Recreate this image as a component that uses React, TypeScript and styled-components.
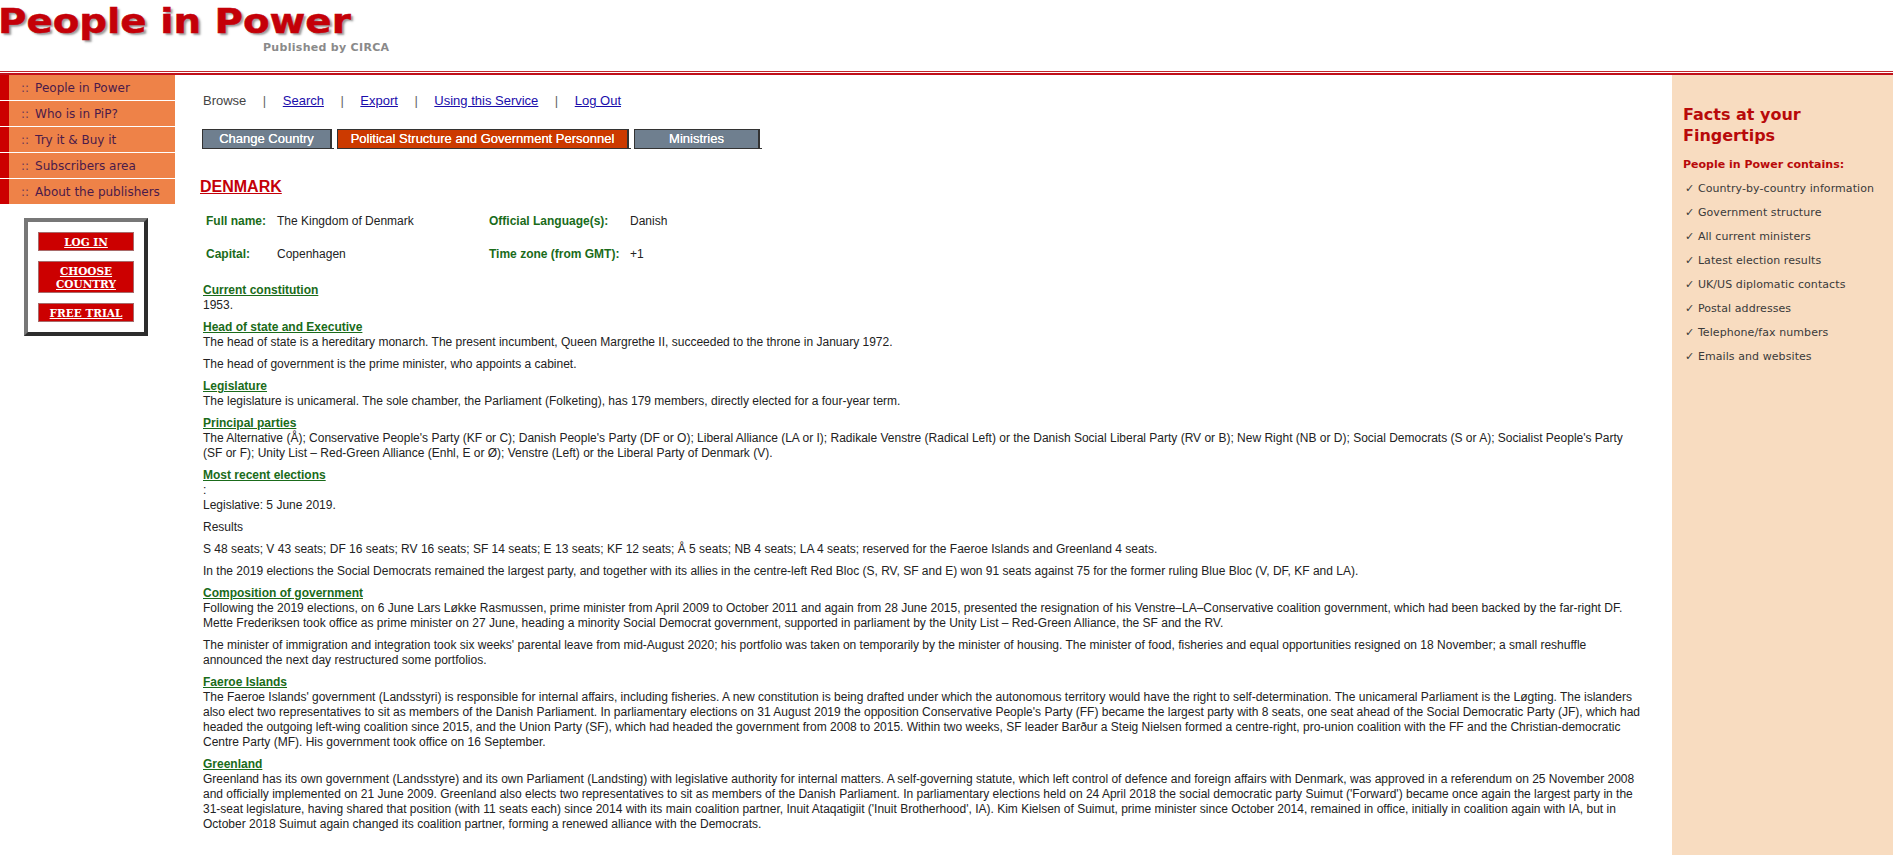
import React from "react";
import styled, { createGlobalStyle } from "styled-components";

const GlobalStyle = createGlobalStyle`
  html, body {
    margin: 0;
    padding: 0;
    background: #fff;
    overflow: hidden;
  }
  body {
    font-family: "Liberation Sans", Arial, sans-serif;
    font-size: 12px;
    color: #222;
  }
`;

const Page = styled.div`
  width: 1893px;
  height: 855px;
  overflow: hidden;
`;

const Masthead = styled.div`
  height: 71px;
  border-bottom: 1px solid #c0272d;
  overflow: hidden;
`;

const LogoTitle = styled.div`
  font-family: "DejaVu Sans", sans-serif;
  font-weight: 700;
  font-size: 34px;
  line-height: 42px;
  color: #c40008;
  white-space: nowrap;
  transform: scaleX(1.14);
  transform-origin: left center;
  margin-left: -2px;
  -webkit-text-stroke: 0.5px #c40008;
  text-shadow: 2px 2px 2px #999;
`;

const LogoSub = styled.div`
  font-family: "DejaVu Sans", sans-serif;
  font-weight: 700;
  font-size: 11px;
  line-height: 12px;
  letter-spacing: 0.3px;
  color: #8a8a8a;
  margin-left: 263px;
`;

const Columns = styled.div`
  display: flex;
  border-top: 2px solid #c0101a;
  margin-top: 1px;
  height: 780px;
`;

const LeftCol = styled.div`
  width: 175px;
  flex: none;
`;

const MenuItem = styled.div`
  height: 25px;
  margin-bottom: 1px;
  background: #ee8248;
  border-left: 9px solid #cc0000;
  padding-left: 12px;
  font-family: "DejaVu Sans", sans-serif;
  font-size: 12px;
  line-height: 27px;
  color: #4b1a4a;
`;

const MenuDots = styled.span`
  margin-right: 6px;
  color: #6b3a5a;
`;

const LoginBox = styled.div`
  width: 96px;
  margin: 14px 0 0 24px;
  padding: 10px;
  background: #fff;
  border: 4px solid;
  border-color: #777 #2d2d2d #2d2d2d #777;
  display: flex;
  flex-direction: column;
  gap: 10px;
`;

const LoginButton = styled.a`
  display: block;
  background: #cc0000;
  border: 1px solid #a86a6a;
  color: #fff;
  font-family: "DejaVu Serif", serif;
  font-weight: 700;
  font-size: 10.5px;
  line-height: 13px;
  padding: 3px 0 1px;
  text-align: center;
  text-decoration: underline;
`;

const Main = styled.div`
  flex: 1;
  min-width: 0;
  padding: 17px 28px 0 25px;
  font-size: 12px;
  line-height: 15px;
`;

const TopNav = styled.div`
  display: flex;
  font-size: 13px;
  line-height: 17px;
  margin-left: 3px;
  color: #444;
`;

const NavSep = styled.span`
  margin: 0 16.5px;
  color: #666;
`;

const NavLink = styled.a`
  color: #1a0dab;
  text-decoration: underline;
`;

const Tabs = styled.div`
  display: flex;
  margin: 20px 0 0 2px;
`;

const Tab = styled.div<{ $active?: boolean; $w: number }>`
  width: ${(p) => p.$w}px;
  height: 20px;
  box-sizing: border-box;
  background: ${(p) => (p.$active ? "#cc3a00" : "#6f7f8f")};
  border: 1px solid #333;
  border-right-width: 2px;
  color: #fff;
  font-size: 13px;
  line-height: 18px;
  text-align: center;
  text-shadow: 0 0 0.5px #fff;
`;

const TabGap = styled.span`
  width: 5px;
  height: 1px;
  align-self: flex-end;
  background: linear-gradient(to right, #333 2px, transparent 2px);
`;

const Country = styled.div`
  margin-top: 29px;
  font-size: 16px;
  line-height: 18px;
  font-weight: 700;
  color: #c40008;
  text-decoration: underline;
`;

const Facts = styled.div`
  display: grid;
  grid-template-columns: 71px 212px 141px 1fr;
  grid-auto-rows: 33px;
  margin: 18px 0 0 6px;
`;

const FactLabel = styled.div`
  color: #1a6b1a;
  font-weight: 700;
`;

const Sections = styled.div`
  margin-top: 3px;
`;

const Section = styled.div`
  margin: 0 0 5px 3px;
  color: #222;
`;

const SectionHead = styled.div`
  color: #1a6b1a;
  font-weight: 700;
  text-decoration: underline;
`;

const Para = styled.p<{ $tight?: boolean }>`
  margin: 0 0 ${(p) => (p.$tight ? 0 : 7)}px;
`;

const RightCol = styled.div`
  width: 221px;
  flex: none;
  background: #f8dcc0;
  padding: 29px 0 0 11px;
  box-sizing: border-box;
  font-family: "DejaVu Sans", sans-serif;
`;

const RightTitle = styled.div`
  font-size: 16px;
  line-height: 21px;
  font-weight: 700;
  color: #b80a0a;
`;

const RightSub = styled.div`
  font-size: 11px;
  font-weight: 700;
  color: #b80a0a;
  margin: 12px 0 6px;
`;

const Feature = styled.div`
  font-size: 11px;
  line-height: 24px;
  letter-spacing: 0.08px;
  color: #3a3a3a;
  padding-left: 2px;
`;

const sections: { head: string; paras: string[] }[] = [
  { head: "Current constitution", paras: ["1953."] },
  {
    head: "Head of state and Executive",
    paras: [
      "The head of state is a hereditary monarch. The present incumbent, Queen Margrethe II, succeeded to the throne in January 1972.",
      "The head of government is the prime minister, who appoints a cabinet.",
    ],
  },
  {
    head: "Legislature",
    paras: [
      "The legislature is unicameral. The sole chamber, the Parliament (Folketing), has 179 members, directly elected for a four-year term.",
    ],
  },
  {
    head: "Principal parties",
    paras: [
      "The Alternative (Å); Conservative People's Party (KF or C); Danish People's Party (DF or O); Liberal Alliance (LA or I); Radikale Venstre (Radical Left) or the Danish Social Liberal Party (RV or B); New Right (NB or D); Social Democrats (S or A); Socialist People's Party (SF or F); Unity List – Red-Green Alliance (Enhl, E or Ø); Venstre (Left) or the Liberal Party of Denmark (V).",
    ],
  },
  {
    head: "Most recent elections",
    paras: [
      ":",
      "Legislative: 5 June 2019.",
      "Results",
      "S 48 seats; V 43 seats; DF 16 seats; RV 16 seats; SF 14 seats; E 13 seats; KF 12 seats; Å 5 seats; NB 4 seats; LA 4 seats; reserved for the Faeroe Islands and Greenland 4 seats.",
      "In the 2019 elections the Social Democrats remained the largest party, and together with its allies in the centre-left Red Bloc (S, RV, SF and E) won 91 seats against 75 for the former ruling Blue Bloc (V, DF, KF and LA).",
    ],
  },
  {
    head: "Composition of government",
    paras: [
      "Following the 2019 elections, on 6 June Lars Løkke Rasmussen, prime minister from April 2009 to October 2011 and again from 28 June 2015, presented the resignation of his Venstre–LA–Conservative coalition government, which had been backed by the far-right DF. Mette Frederiksen took office as prime minister on 27 June, heading a minority Social Democrat government, supported in parliament by the Unity List – Red-Green Alliance, the SF and the RV.",
      "The minister of immigration and integration took six weeks' parental leave from mid-August 2020; his portfolio was taken on temporarily by the minister of housing. The minister of food, fisheries and equal opportunities resigned on 18 November; a small reshuffle announced the next day restructured some portfolios.",
    ],
  },
  {
    head: "Faeroe Islands",
    paras: [
      "The Faeroe Islands' government (Landsstyri) is responsible for internal affairs, including fisheries. A new constitution is being drafted under which the autonomous territory would have the right to self-determination. The unicameral Parliament is the Løgting. The islanders also elect two representatives to sit as members of the Danish Parliament. In parliamentary elections on 31 August 2019 the opposition Conservative People's Party (FF) became the largest party with 8 seats, one seat ahead of the Social Democratic Party (JF), which had headed the outgoing left-wing coalition since 2015, and the Union Party (SF), which had headed the government from 2008 to 2015. Within two weeks, SF leader Barður a Steig Nielsen formed a centre-right, pro-union coalition with the FF and the Christian-democratic Centre Party (MF). His government took office on 16 September.",
    ],
  },
  {
    head: "Greenland",
    paras: [
      "Greenland has its own government (Landsstyre) and its own Parliament (Landsting) with legislative authority for internal matters. A self-governing statute, which left control of defence and foreign affairs with Denmark, was approved in a referendum on 25 November 2008 and officially implemented on 21 June 2009. Greenland also elects two representatives to sit as members of the Danish Parliament. In parliamentary elections held on 24 April 2018 the social democratic party Suimut ('Forward') became once again the largest party in the 31-seat legislature, having shared that position (with 11 seats each) since 2014 with its main coalition partner, Inuit Ataqatigiit ('Inuit Brotherhood', IA). Kim Kielsen of Suimut, prime minister since October 2014, remained in office, initially in coalition again with IA, but in October 2018 Suimut again changed its coalition partner, forming a renewed alliance with the Democrats.",
    ],
  },
];

const menu = ["People in Power", "Who is in PiP?", "Try it & Buy it", "Subscribers area", "About the publishers"];
const features = [
  "Country-by-country information",
  "Government structure",
  "All current ministers",
  "Latest election results",
  "UK/US diplomatic contacts",
  "Postal addresses",
  "Telephone/fax numbers",
  "Emails and websites",
];

const App: React.FC = () => {
  return (
    <Page>
      <GlobalStyle />
      <Masthead>
        <LogoTitle>People in Power</LogoTitle>
        <LogoSub>Published by CIRCA</LogoSub>
      </Masthead>
      <Columns>
        <LeftCol>
          {menu.map((m) => (
            <MenuItem key={m}>
              <MenuDots>::</MenuDots>
              {m}
            </MenuItem>
          ))}
          <LoginBox>
            <LoginButton>LOG IN</LoginButton>
            <LoginButton>
              CHOOSE
              <br />
              COUNTRY
            </LoginButton>
            <LoginButton>FREE TRIAL</LoginButton>
          </LoginBox>
        </LeftCol>
        <Main>
          <TopNav>
            Browse
            <NavSep>|</NavSep>
            <NavLink>Search</NavLink>
            <NavSep>|</NavSep>
            <NavLink>Export</NavLink>
            <NavSep>|</NavSep>
            <NavLink>Using this Service</NavLink>
            <NavSep>|</NavSep>
            <NavLink>Log Out</NavLink>
          </TopNav>
          <Tabs>
            <Tab $w={130}>Change Country</Tab>
            <TabGap />
            <Tab $w={292} $active>
              Political Structure and Government Personnel
            </Tab>
            <TabGap />
            <Tab $w={126}>Ministries</Tab>
            <TabGap />
          </Tabs>
          <Country>DENMARK</Country>
          <Facts>
            <FactLabel>Full name:</FactLabel>
            <div>The Kingdom of Denmark</div>
            <FactLabel>Official Language(s):</FactLabel>
            <div>Danish</div>
            <FactLabel>Capital:</FactLabel>
            <div>Copenhagen</div>
            <FactLabel>Time zone (from GMT):</FactLabel>
            <div>+1</div>
          </Facts>
          <Sections>
            {sections.map((s) => (
              <Section key={s.head}>
                <SectionHead>{s.head}</SectionHead>
                {s.paras.map((p) => (
                  <Para key={p} $tight={p === ":"}>
                    {p}
                  </Para>
                ))}
              </Section>
            ))}
          </Sections>
        </Main>
        <RightCol>
          <RightTitle>
            Facts at your
            <br />
            Fingertips
          </RightTitle>
          <RightSub>People in Power contains:</RightSub>
          {features.map((f) => (
            <Feature key={f}>✓ {f}</Feature>
          ))}
        </RightCol>
      </Columns>
    </Page>
  );
};

export default App;
